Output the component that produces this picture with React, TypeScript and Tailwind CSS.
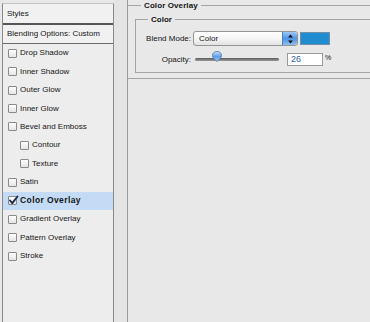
import React from 'react'

const effects: { label: string; indent?: boolean; checked?: boolean; active?: boolean }[] = [
  { label: 'Drop Shadow' },
  { label: 'Inner Shadow' },
  { label: 'Outer Glow' },
  { label: 'Inner Glow' },
  { label: 'Bevel and Emboss' },
  { label: 'Contour', indent: true },
  { label: 'Texture', indent: true },
  { label: 'Satin' },
  { label: 'Color Overlay', checked: true, active: true },
  { label: 'Gradient Overlay' },
  { label: 'Pattern Overlay' },
  { label: 'Stroke' },
]

const CheckBox = ({ checked }: { checked?: boolean }) => (
  <span className='relative inline-block w-[9px] h-[9px] shrink-0 border border-[#8a8a8a] rounded-[1px] bg-gradient-to-b from-white to-[#e4e4e4]'>
    {checked && (
      <svg className='absolute -left-[1px] -top-[2px]' width='11' height='11' viewBox='0 0 11 11'>
        <path d='M2 5.5 L4.3 8.2 L9.5 1.5' fill='none' stroke='#1b2a4a' strokeWidth='1.9' strokeLinecap='round' strokeLinejoin='round' />
      </svg>
    )}
  </span>
)

const StylesList = () => (
  <div className='ml-[2px] mt-[3px] w-[112px] shrink-0 border-x border-t border-x-[#8a8a8a] border-t-[#c4c4c4] bg-[#ededed] flex flex-col'>
    <div className='h-[21px] flex items-center pl-[4px] bg-[#f1f1f1] border-b-2 border-[#555555]'>Styles</div>
    <div className='h-[19px] flex items-center pl-[4px] bg-[#f1f1f1] border-b border-[#6a6a6a]'>Blending Options: Custom</div>
    <ul className='flex flex-col'>
      {effects.map((el, i) => (
        <li
          key={i}
          className={`h-[18.45px] flex items-center gap-[3px] ${el.indent ? 'pl-[17px]' : 'pl-[5px]'} ${el.active ? 'bg-[#c3dbf5] font-bold text-[8.5px] tracking-[0.4px]' : ''}`}
        >
          <CheckBox checked={el.checked} />
          <span>{el.label}</span>
        </li>
      ))}
    </ul>
  </div>
)

const Stepper = () => (
  <span className='w-[15px] h-full flex items-center justify-center rounded-r-[3px] bg-gradient-to-b from-[#9cc6f2] via-[#4f94e4] to-[#8dbdf0] border-l border-[#4a7fc0]'>
    <svg width='7' height='10' viewBox='0 0 7 10'>
      <path d='M3.5 0.5 L6 3.5 L1 3.5 Z' fill='#111' />
      <path d='M3.5 9.5 L6 6.5 L1 6.5 Z' fill='#111' />
    </svg>
  </span>
)

const SliderThumb = () => (
  <svg width='10' height='11' viewBox='0 0 10 11'>
    <defs>
      <linearGradient id='thumb' x1='0' y1='0' x2='0' y2='1'>
        <stop offset='0' stopColor='#cfe3fa' />
        <stop offset='0.5' stopColor='#5e9ee8' />
        <stop offset='1' stopColor='#9fc8f3' />
      </linearGradient>
    </defs>
    <path d='M5 0.5 C7.8 0.5 9.5 2.2 9.5 4.6 C9.5 6.8 7.4 8.6 5 10.5 C2.6 8.6 0.5 6.8 0.5 4.6 C0.5 2.2 2.2 0.5 5 0.5 Z' fill='url(#thumb)' stroke='#4777b3' strokeWidth='0.8' />
  </svg>
)

const ColorOverlayPanel = () => (
  <div className='w-[260px] shrink-0 border-l border-[#9c9c9c] h-full'>
    <fieldset className='border-y border-[#a4a4a4]'>
      <legend className='ml-[13px] px-[3px] font-bold leading-[11px] tracking-[0.1px]'>Color Overlay</legend>
      <fieldset className='ml-[7px] mt-[3px] mb-[5px] border-l border-y border-[#a4a4a4]'>
        <legend className='ml-[12px] px-[3px] font-bold leading-[11px]'>Color</legend>
        <div className='pt-[6px] pb-[6px] flex flex-col gap-[7px]'>
          <div className='h-[15px] flex items-center'>
            <span className='w-[56px] text-right pr-[1px]'>Blend Mode:</span>
            <div className='ml-[1px] w-[105px] h-full flex items-center border border-[#959595] rounded-[3px] bg-gradient-to-b from-white via-[#f6f6f6] to-[#e2e2e2]'>
              <span className='flex-1 pl-[5px]'>Color</span>
              <Stepper />
            </div>
            <span className='ml-[2px] w-[30px] h-[13px] border border-[#6f8fa8] bg-[#1f8dd0]' />
          </div>
          <div className='h-[13px] flex items-center'>
            <span className='w-[55px] text-right'>Opacity:</span>
            <div className='relative ml-[4px] w-[84px] h-full flex items-center'>
              <span className='w-full h-[3px] rounded-full bg-gradient-to-b from-[#5c5c5c] to-[#9a9a9a]' />
              <span className='absolute left-[17px] -top-[2px]'>
                <SliderThumb />
              </span>
            </div>
            <span className='ml-[8px] w-[36px] h-full flex items-center border border-[#9a9a9a] bg-white pl-[3px] text-[#2d5ea6] text-[9px]'>26</span>
            <span className='ml-[2px] text-[7px] -mt-[3px]'>%</span>
          </div>
        </div>
      </fieldset>
    </fieldset>
  </div>
)

export default function App() {
  return (
    <div
      className='w-[370px] h-[322px] overflow-hidden flex bg-[#e8e8e8] text-[#151515] text-[8px]'
      style={{ fontFamily: '"Liberation Sans", Arial, sans-serif' }}
    >
      <StylesList />
      <div className='w-[13px] shrink-0 bg-[#e4e4e4]' />
      <ColorOverlayPanel />
    </div>
  )
}
